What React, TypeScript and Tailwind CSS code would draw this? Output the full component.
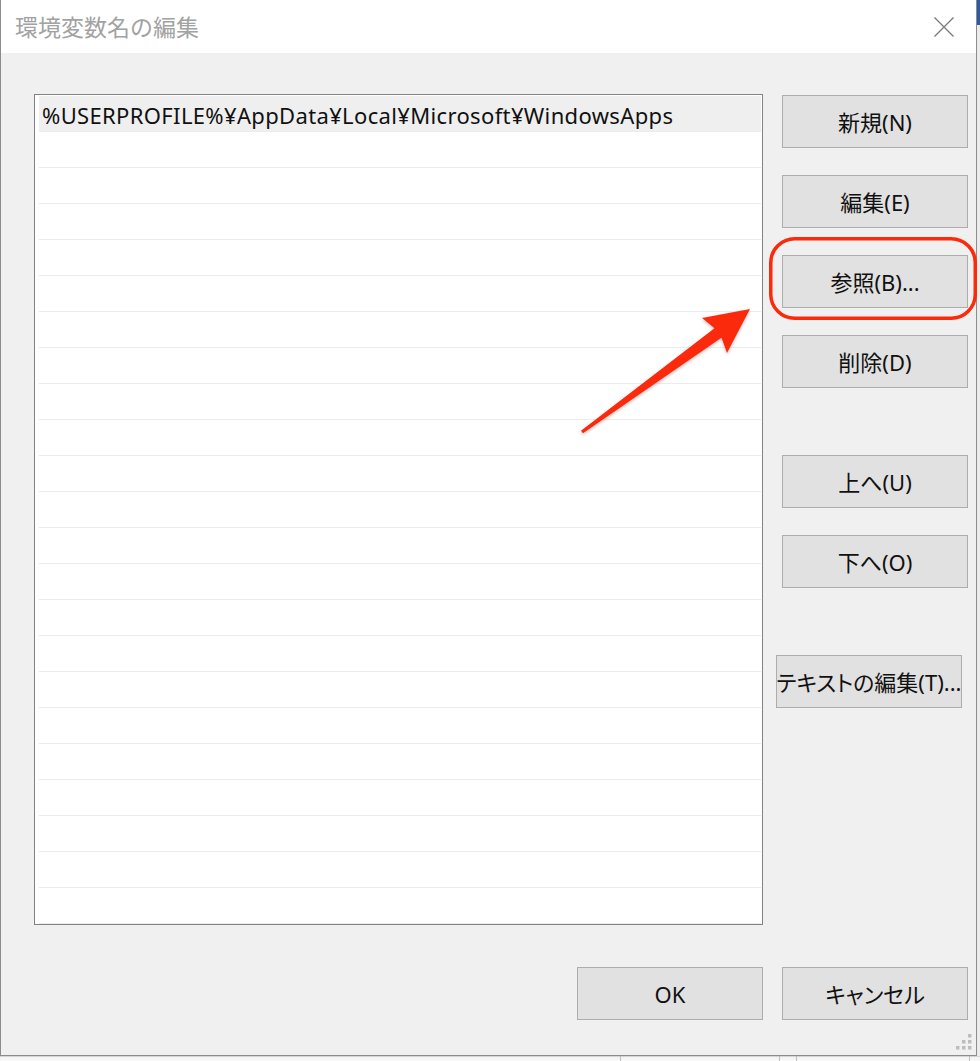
// ── Windows "edit environment variable" dialog ───────────────────────────────

const ROWS = 23;

function WinButton({ label, className = "" }: { label: string; className?: string }) {
  return (
    <div
      className={`flex h-[53px] w-[186px] items-center justify-center border border-[#adadad] bg-[#e1e1e1] pt-[2px] text-[22px] text-[#111] [font-feature-settings:'palt'] ${className}`}
    >
      {label}
    </div>
  );
}

function CloseIcon() {
  return (
    <svg width="20" height="20" viewBox="0 0 20 20" className="mr-[22px]">
      <path d="M0.5 0.5 L19.5 19.5 M19.5 0.5 L0.5 19.5" stroke="#7a7a7a" strokeWidth="1.3" fill="none" />
    </svg>
  );
}

function ResizeGrip() {
  const dots = [
    [12, 0],
    [6, 6],
    [12, 6],
    [0, 12],
    [6, 12],
    [12, 12],
  ];
  return (
    <svg width="16" height="16" viewBox="0 0 16 16" className="absolute bottom-[5px] right-[4px]">
      {dots.map(([x, y], i) => (
        <rect key={i} x={x} y={y} width="3.5" height="3.5" fill="#bdbdbd" />
      ))}
    </svg>
  );
}

function PathList() {
  return (
    <div className="h-[831px] w-[729px] border border-[#828282] bg-white pb-0 pl-[4px] pr-[1px] pt-[1px]">
      {Array.from({ length: ROWS }).map((_, i) => (
        <div
          key={i}
          className={`flex h-[36px] items-center border-b pl-[3px] pt-[3px] text-[22px] tracking-[0.35px] text-[#111] ${
            i === 0 ? "border-[#ececec] bg-[#efefef]" : "border-[#ebebeb]"
          }`}
        >
          {i === 0 ? "%USERPROFILE%¥AppData¥Local¥Microsoft¥WindowsApps" : null}
        </div>
      ))}
    </div>
  );
}

function Annotation() {
  return (
    <svg
      width="980"
      height="1061"
      viewBox="0 0 980 1061"
      className="pointer-events-none absolute left-0 top-0"
    >
      <defs>
        <filter id="shadow" x="-10%" y="-10%" width="130%" height="130%">
          <feDropShadow dx="0" dy="1.5" stdDeviation="1.5" floodColor="#000" floodOpacity="0.25" />
        </filter>
      </defs>
      <rect x="770.75" y="238.75" width="204.5" height="79.5" rx="24" fill="none" stroke="#fb2a0a" strokeWidth="3.5" />
      <polygon
        points="581,430.8 714.5,328.2 702,318 750,309 727,353 721.5,337.8 583,433.2"
        fill="#fc2c0b"
        filter="url(#shadow)"
      />
    </svg>
  );
}

export default function App() {
  return (
    <div className="relative flex h-[1061px] w-[980px] flex-col overflow-hidden bg-[#f3f3f3] font-['Noto_Sans','Noto_Sans_CJK_JP',sans-serif]">
      <div className="flex h-[1056px]">
        {/* Dialog */}
        <div className="relative flex h-[1056px] w-[977px] flex-col border-x border-b border-[#8c8c8c] bg-[#f0f0f0]">
          {/* Title bar */}
          <div className="flex h-[53px] items-center justify-between bg-white pl-[14px]">
            <span className="text-[23px] text-[#a2a2a2] font-['Noto_Sans_CJK_JP',sans-serif]">環境変数名の編集</span>
            <CloseIcon />
          </div>

          {/* Body */}
          <div className="flex pl-[33px] pt-[41px]">
            <PathList />
            <div className="ml-[19px] flex flex-col pt-[1px]">
              <WinButton label="新規(N)" />
              <WinButton label="編集(E)" className="mt-[27px]" />
              <WinButton label="参照(B)..." className="mt-[27px]" />
              <WinButton label="削除(D)" className="mt-[27px]" />
              <WinButton label="上へ(U)" className="mt-[67px]" />
              <WinButton label="下へ(O)" className="mt-[27px]" />
              <WinButton label="テキストの編集(T)..." className="-ml-[6px] mt-[67px] whitespace-nowrap" />
            </div>
          </div>

          {/* Footer buttons */}
          <div className="mt-[42px] flex justify-end gap-[19px] pr-[8px]">
            <WinButton label="OK" />
            <WinButton label="キャンセル" />
          </div>

          <ResizeGrip />
        </div>

        {/* Background window peeking at the right */}
        <div className="flex flex-1 flex-col">
          <div className="h-[25px] bg-[#2b5ba6]" />
          <div className="flex-1 bg-[#ececec]" />
        </div>
      </div>

      {/* Background strip below */}
      <div className="flex flex-1 gap-[16px] bg-[#f7f7f7] pl-[620px] shadow-[inset_0_1px_1px_rgba(0,0,0,0.15)]">
        <div className="h-full w-[160px] border-x border-[#bdbdbd]" />
        <div className="h-full w-[174px] border-x border-[#bdbdbd]" />
      </div>

      <Annotation />
    </div>
  );
}
